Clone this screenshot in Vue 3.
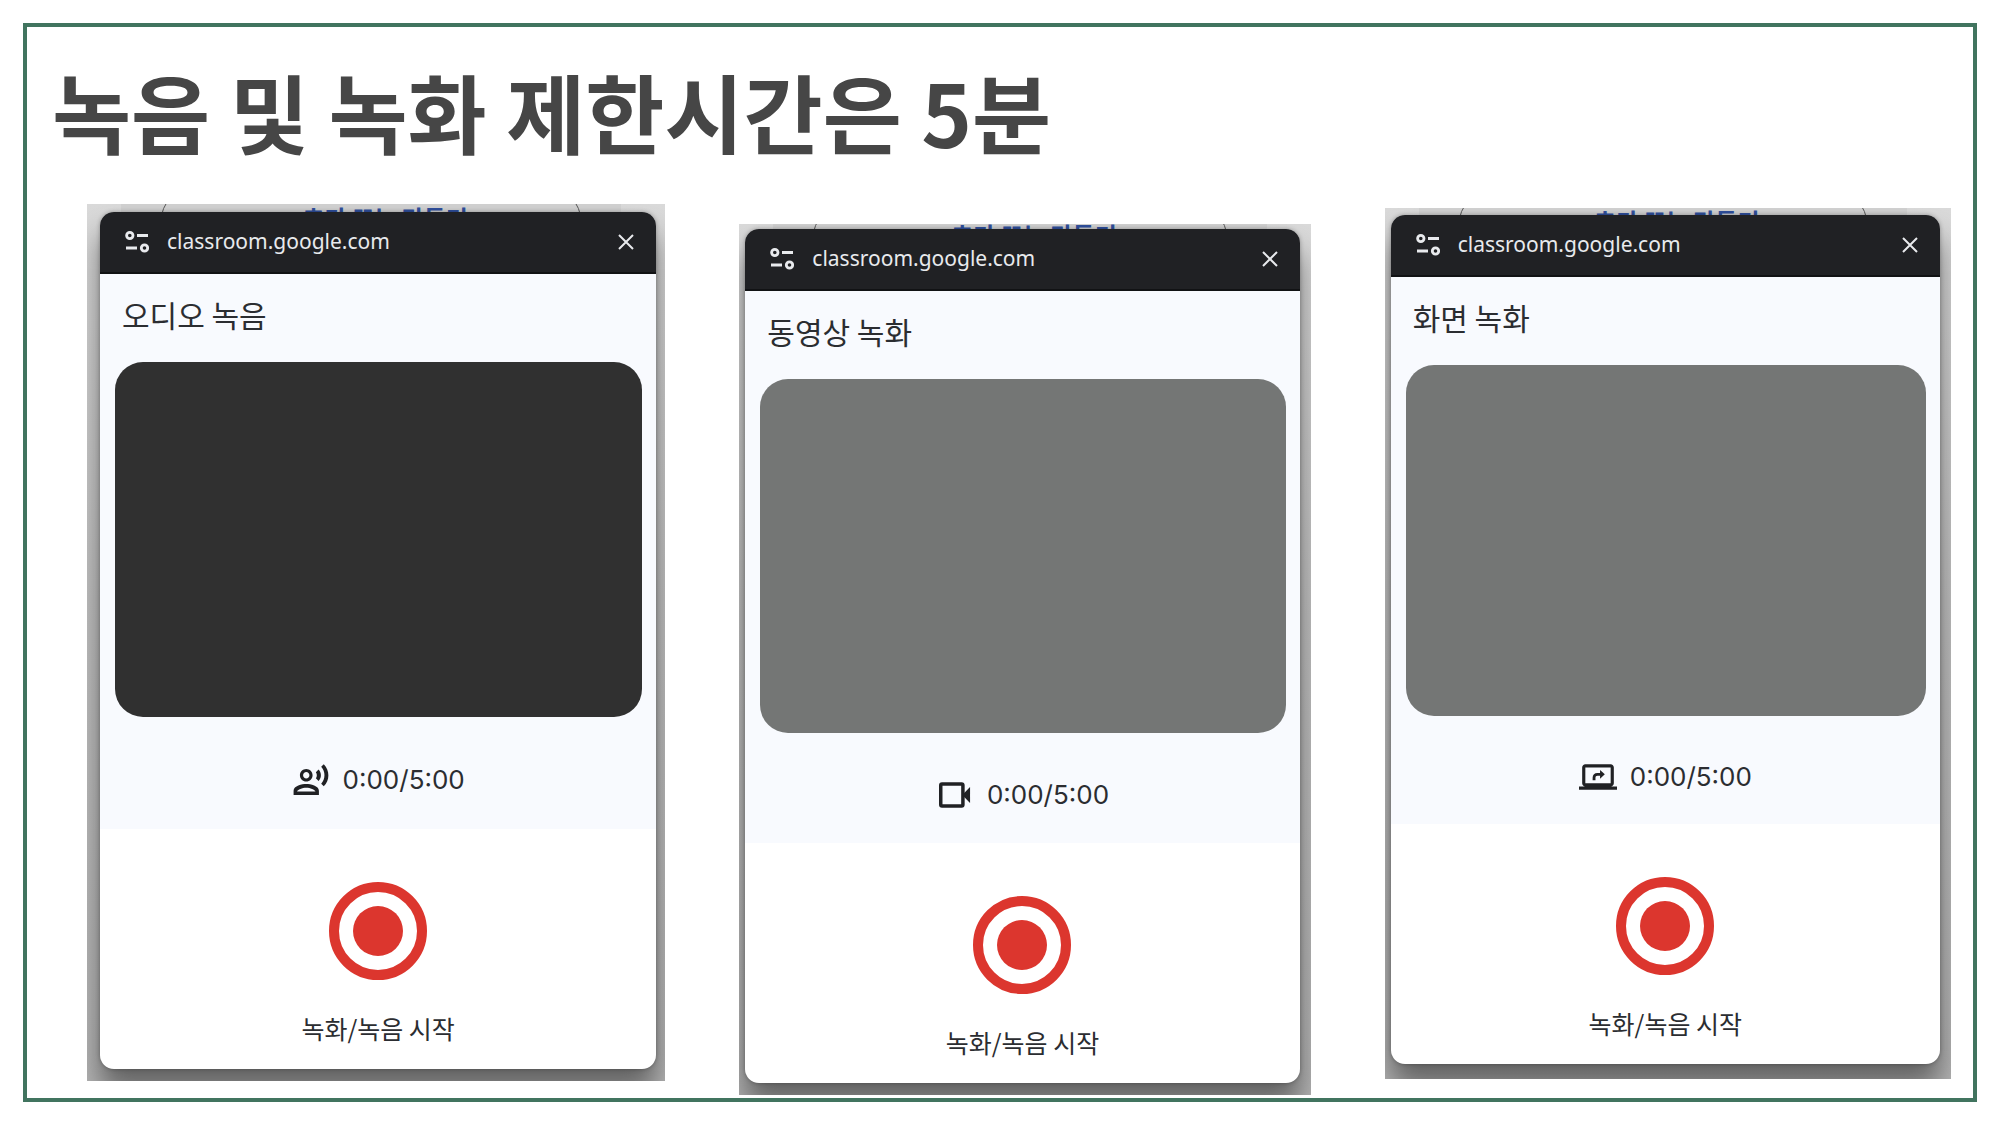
<script setup>
import { ref } from 'vue'

const recorders = ref([
  { id: 'audio', title: '오디오 녹음', elapsed: '0:00', limit: '5:00' },
  { id: 'video', title: '동영상 녹화', elapsed: '0:00', limit: '5:00' },
  { id: 'screen', title: '화면 녹화', elapsed: '0:00', limit: '5:00' }
])
</script>

<template>
  <main class="slide">
    <h1 class="slide-title">녹음 및 녹화 제한시간은 5분</h1>

    <div class="gallery">
      <div v-for="item in recorders" :key="item.id" class="shot" :class="`shot-${item.id}`">
        <!-- dimmed page behind the popup -->
        <div class="backdrop" aria-hidden="true">
          <div class="backdrop-pill">추가 또는 만들기</div>
        </div>

        <section class="popup">
          <header class="popup-bar">
            <svg class="site-icon" viewBox="0 0 24 24" fill="none" stroke="#e8eaed" stroke-width="2.8">
              <circle cx="4.8" cy="5.5" r="3.2" />
              <path d="M12 5.5h11M1 18h11" />
              <circle cx="19.5" cy="18" r="3.2" />
            </svg>
            <span class="popup-url">classroom.google.com</span>
            <button class="popup-close" type="button" aria-label="닫기">
              <svg viewBox="0 0 16 16" fill="none" stroke="#e8eaed" stroke-width="2">
                <path d="M1 1l14 14M15 1l-14 14" />
              </svg>
            </button>
          </header>

          <div class="popup-body">
            <h2 class="popup-title">{{ item.title }}</h2>
            <div class="preview"></div>
            <div class="counter">
              <svg v-if="item.id === 'audio'" class="counter-icon" viewBox="0 0 24 24" fill="currentColor">
                <path d="M9 13c2.21 0 4-1.79 4-4s-1.79-4-4-4-4 1.79-4 4 1.79 4 4 4zm0-6c1.1 0 2 .9 2 2s-.9 2-2 2-2-.9-2-2 .9-2 2-2z" />
                <path fill-rule="evenodd" d="M9 14.6c-2.67 0-8 1.2-8 4.2V21.4h16v-2.6c0-3-5.33-4.2-8-4.2zm-5.8 4.6c.3-.9 3.3-2.3 5.8-2.3s5.5 1.4 5.8 2.3z" />
                <path d="M15.08 7.05c.84 1.18.84 2.71 0 3.89l1.68 1.69c2.02-2.02 2.02-5.07 0-7.27zM20.07 2l-1.63 1.63c2.77 3.02 2.77 7.56 0 10.74L20.07 16c3.9-3.89 3.91-9.95 0-14z" />
              </svg>
              <svg v-else-if="item.id === 'video'" class="counter-icon" viewBox="0 0 24 24">
                <rect x="3" y="5" width="14" height="14" rx="0.8" fill="none" stroke="currentColor" stroke-width="2.2" />
                <path d="M17.5 11l4-4v10l-4-4z" fill="currentColor" />
              </svg>
              <svg v-else class="counter-icon" viewBox="0 0 24 24" fill="currentColor">
                <path d="M20 18c1.1 0 2-.9 2-2V6c0-1.1-.9-2-2-2H4c-1.1 0-2 .9-2 2v10c0 1.1.9 2 2 2H0v2h24v-2h-4zM4 16V6h16v10H4z" />
                <path d="M8.6 14v-1.6c0-1.9 1.2-3 3-3h1.7V7.5l3 2.8-3 2.8v-1.9h-1.6c-.9 0-1.3.5-1.3 1.3V14z" />
              </svg>
              <span class="counter-text">{{ item.elapsed }}/{{ item.limit }}</span>
            </div>
          </div>

          <footer class="popup-footer">
            <button class="record" type="button">
              <svg class="record-icon" viewBox="0 0 98 98">
                <circle cx="49" cy="49" r="44" fill="none" stroke="#dc362e" stroke-width="10" />
                <circle cx="49" cy="49" r="25" fill="#dc362e" />
              </svg>
              <span>녹화/녹음 시작</span>
            </button>
          </footer>
        </section>
      </div>
    </div>
  </main>
</template>

<style>
body {
  margin: 0;
  background: #fff;
}
</style>

<style scoped>
.slide {
  box-sizing: border-box;
  margin: 23px;
  min-height: calc(100vh - 46px);
  padding-top: 39px;
  border: 4px solid #41745f;
  font-family: 'Noto Sans CJK KR', sans-serif;
  color: #2b2d31;
}

.slide-title {
  margin: 0 25px 48px;
  font-size: 86px;
  line-height: 90px;
  font-weight: 700;
  color: #464646;
}

.gallery {
  display: grid;
  grid-template-columns: 578fr 571fr 566fr;
  align-items: start;
  gap: 74px;
  padding: 0 22px 0 60px;
}

/* --peek is how much of the page shows above the popup */
.shot {
  position: relative;
  overflow: hidden;
  padding: var(--peek) 11px 12px 6px;
  background: linear-gradient(#d9d9d9, #c2c2c2 45%, #b4b4b4);
}

.shot-audio {
  --peek: 8px;
  --counter-height: 112px;
  padding-right: 9px;
  padding-left: 13px;
}

.shot-video {
  --peek: 5px;
  --counter-height: 110px;
  margin-top: 20px;
}

.shot-screen {
  --peek: 7px;
  --counter-height: 108px;
  margin-top: 4px;
  padding-bottom: 15px;
}

.backdrop {
  position: absolute;
  top: calc(var(--peek) - 8px);
  left: 34px;
  right: 44px;
  height: 40px;
  background: #d0d0d0;
}

.backdrop-pill {
  position: absolute;
  top: -13px;
  left: 40px;
  right: 40px;
  height: 56px;
  box-sizing: border-box;
  padding: 14px 0 0 28px;
  border: 1px solid #555;
  border-radius: 28px;
  font-size: 24px;
  line-height: 24px;
  font-weight: 700;
  text-align: center;
  color: #2f4f9c;
}

.popup {
  position: relative;
  border-radius: 14px;
  background: #fff;
  box-shadow: 0 0 4px rgba(0, 0, 0, 0.3), 0 22px 28px rgba(0, 0, 0, 0.45);
}

.popup-bar {
  box-sizing: border-box;
  height: 62px;
  display: flex;
  align-items: center;
  padding: 0 22px 0 25px;
  border-bottom: 2px solid #111214;
  border-radius: 14px 14px 0 0;
  background: #202124;
}

.site-icon {
  width: 24px;
  height: 24px;
  margin-right: 18px;
}

.popup-url {
  flex: 1;
  padding-bottom: 2px;
  font-family: 'Noto Sans', sans-serif;
  font-size: 21px;
  line-height: 30px;
  color: #e8eaed;
}

.popup-close {
  display: flex;
  padding: 0;
  border: none;
  background: none;
  cursor: pointer;
}

.popup-close svg {
  width: 16px;
  height: 16px;
}

.popup-body {
  background: #f8fafe;
}

.popup-title {
  margin: 0;
  padding: 20px 22px 28px;
  font-size: 30px;
  line-height: 40px;
  font-weight: 400;
}

.preview {
  margin: 0 14px 0 15px;
  aspect-ratio: 527 / 355;
  border-radius: 28px;
  background: #747675;
}

.shot-audio .preview {
  background: #303030;
}

.counter {
  box-sizing: border-box;
  height: var(--counter-height);
  display: flex;
  align-items: center;
  justify-content: center;
  gap: 13px;
  padding-top: 14px;
}

.counter-icon {
  width: 38px;
  height: 38px;
  color: #202124;
}

.counter-text {
  font-family: Inter, sans-serif;
  font-size: 26px;
  line-height: 32px;
}

.popup-footer {
  display: flex;
  justify-content: center;
  padding: 53px 0 26px;
}

.record {
  display: flex;
  flex-direction: column;
  align-items: center;
  gap: 33px;
  padding: 0;
  border: none;
  background: none;
  font-family: inherit;
  font-size: 25px;
  line-height: 30px;
  color: inherit;
  cursor: pointer;
}

.record-icon {
  width: 98px;
  height: 98px;
}
</style>
